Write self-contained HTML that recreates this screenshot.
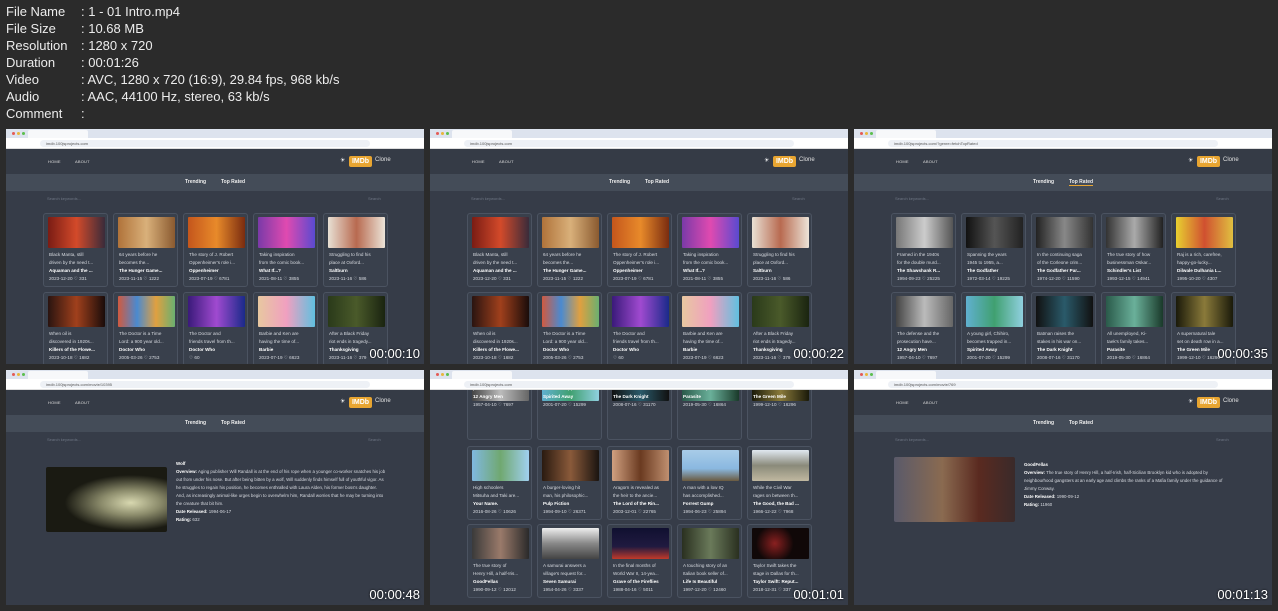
<!DOCTYPE html><html><head><meta charset="utf-8"><style>
*{margin:0;padding:0;box-sizing:border-box}
body{width:1278px;height:611px;background:#2b2b2b;font-family:"Liberation Sans",sans-serif;position:relative;overflow:hidden}
.info{position:absolute;left:6px;top:3px;color:#ececec;font-size:13px;line-height:17px}
.info div span{display:inline-block;width:75px}
.t{position:absolute;width:418px;height:235px;background:#363c48;overflow:hidden}
.tab{position:absolute;left:0;top:0;width:418px;height:9px;background:#dde3ee}
.tab i{position:absolute;top:3px;width:3px;height:3px;border-radius:50%}
.tab b{position:absolute;left:22px;top:1px;width:60px;height:8px;background:#f7f8fa;border-radius:2px 2px 0 0}
.addr{position:absolute;left:0;top:9px;width:418px;height:11px;background:#fff;border-bottom:1px solid #ddd}
.addr b{position:absolute;left:34px;top:2px;width:330px;height:7px;background:#eef1f6;border-radius:4px}
.addr s{position:absolute;left:40px;top:2px;font-size:4px;color:#555;text-decoration:none;line-height:7px}
.hd{position:absolute;left:0;top:20px;width:418px;height:25px;background:#353b46}
.hd .n{position:absolute;top:10px;font-size:4px;color:#ddd;letter-spacing:.2px}
.hd .im{position:absolute;left:343px;top:7px;width:23px;height:11px;background:#e8a531;border-radius:2px;color:#fff;font-size:7px;line-height:11px;text-align:center;font-weight:bold}
.hd .cl{position:absolute;left:369px;top:8px;font-size:6px;color:#e0e0e0}
.hd .sun{position:absolute;left:334px;top:8px;font-size:6px;color:#fff}
.nv{position:absolute;left:0;top:45px;width:418px;height:17px;background:#444c58}
.nv span{position:absolute;top:5px;font-size:5px;color:#eee;font-weight:bold}
.sr{position:absolute;top:67px;font-size:4px;color:#6e7684}
.c{position:absolute;width:65px;height:74px;border:1px solid #4b5361;border-radius:3px;background:#39404c}
.c .p{position:absolute;left:4px;top:3px;width:57px;height:31px;border-radius:1px}
.c .x{position:absolute;left:5px;top:37px;font-size:4.6px;line-height:8px;color:#d7dae0;white-space:nowrap;width:56px;overflow:hidden}
.c .x b{color:#fff}
.ts{position:absolute;right:4px;bottom:3px;color:#fff;font-size:13px;text-shadow:0 0 2px #000}
.dt{position:absolute;font-size:4.4px;line-height:8px;color:#d7dae0}
.dt b{color:#fff}
</style></head><body>
<div class="info">
<div><span>File Name</span>: 1 - 01 Intro.mp4</div>
<div><span>File Size</span>: 10.68 MB</div>
<div><span>Resolution</span>: 1280 x 720</div>
<div><span>Duration</span>: 00:01:26</div>
<div><span>Video</span>: AVC, 1280 x 720 (16:9), 29.84 fps, 968 kb/s</div>
<div><span>Audio</span>: AAC, 44100 Hz, stereo, 63 kb/s</div>
<div><span>Comment</span>:</div>
</div>

<!-- thumb 1 -->
<div class="t" style="left:6px;top:129px">
<div class="tab"><i style="left:6px;background:#e45b55"></i><i style="left:11px;background:#e8b63a"></i><i style="left:16px;background:#5bbf4e"></i><b></b></div>
<div class="addr"><b></b><s>imdb.100jsprojects.com</s></div>
<div class="hd"><span class="n" style="left:42px">HOME</span><span class="n" style="left:69px">ABOUT</span><span class="sun">☀</span><span class="im">IMDb</span><span class="cl">Clone</span></div>
<div class="nv"><span style="left:179px">Trending</span><span style="left:215px">Top Rated</span></div>
<div class="sr" style="left:41px">Search keywords...</div><div class="sr" style="left:362px">Search</div>
<div class="c" style="left:37px;top:84px"><div class="p" style="background:linear-gradient(90deg,#7a1c14,#d34a2a,#3a2b3a)"></div><div class="x">Black Manta, still<br>driven by the need t...<br><b>Aquaman and the ...</b><br>2023-12-20 ♡ 331</div></div>
<div class="c" style="left:107px;top:84px"><div class="p" style="background:linear-gradient(90deg,#b0733a,#d9b07a,#8a5a30)"></div><div class="x">64 years before he<br>becomes the...<br><b>The Hunger Game...</b><br>2023-11-15 ♡ 1222</div></div>
<div class="c" style="left:177px;top:84px"><div class="p" style="background:linear-gradient(90deg,#c4561c,#e88a2a,#7a2c10)"></div><div class="x">The story of J. Robert<br>Oppenheimer's role i...<br><b>Oppenheimer</b><br>2023-07-19 ♡ 6781</div></div>
<div class="c" style="left:247px;top:84px"><div class="p" style="background:linear-gradient(90deg,#7a3aa8,#e04ab0,#5a4ad0)"></div><div class="x">Taking inspiration<br>from the comic book...<br><b>What If...?</b><br>2021-08-11 ♡ 3855</div></div>
<div class="c" style="left:317px;top:84px"><div class="p" style="background:linear-gradient(90deg,#e8e0d4,#b86a50,#ece4d8)"></div><div class="x">Struggling to find his<br>place at Oxford...<br><b>Saltburn</b><br>2023-11-16 ♡ 586</div></div>
<div class="c" style="left:37px;top:163px"><div class="p" style="background:linear-gradient(90deg,#2a1410,#a0401c,#1a0c0a)"></div><div class="x">When oil is<br>discovered in 1920s...<br><b>Killers of the Flowe...</b><br>2023-10-18 ♡ 1682</div></div>
<div class="c" style="left:107px;top:163px"><div class="p" style="background:linear-gradient(90deg,#d05a40,#4a8ad0,#e0a040,#6ab070)"></div><div class="x">The Doctor is a Time<br>Lord: a 900 year old...<br><b>Doctor Who</b><br>2005-03-26 ♡ 2753</div></div>
<div class="c" style="left:177px;top:163px"><div class="p" style="background:linear-gradient(90deg,#3a1a7a,#a04ad0,#1a2a8a)"></div><div class="x">The Doctor and<br>friends travel from th...<br><b>Doctor Who</b><br>♡ 60</div></div>
<div class="c" style="left:247px;top:163px"><div class="p" style="background:linear-gradient(90deg,#e8c8a0,#f0a0c0,#60c0e0)"></div><div class="x">Barbie and Ken are<br>having the time of...<br><b>Barbie</b><br>2023-07-19 ♡ 6623</div></div>
<div class="c" style="left:317px;top:163px"><div class="p" style="background:linear-gradient(90deg,#2a3a1a,#4a5a2a,#1a2410)"></div><div class="x">After a Black Friday<br>riot ends in tragedy...<br><b>Thanksgiving</b><br>2023-11-16 ♡ 379</div></div>
<div class="ts">00:00:10</div>
</div>

<!-- thumb 2 -->
<div class="t" style="left:430px;top:129px">
<div class="tab"><i style="left:6px;background:#e45b55"></i><i style="left:11px;background:#e8b63a"></i><i style="left:16px;background:#5bbf4e"></i><b></b></div>
<div class="addr"><b></b><s>imdb.100jsprojects.com</s></div>
<div class="hd"><span class="n" style="left:42px">HOME</span><span class="n" style="left:69px">ABOUT</span><span class="sun">☀</span><span class="im">IMDb</span><span class="cl">Clone</span></div>
<div class="nv"><span style="left:179px">Trending</span><span style="left:215px">Top Rated</span></div>
<div class="sr" style="left:41px">Search keywords...</div><div class="sr" style="left:362px">Search</div>
<div class="c" style="left:37px;top:84px"><div class="p" style="background:linear-gradient(90deg,#7a1c14,#d34a2a,#3a2b3a)"></div><div class="x">Black Manta, still<br>driven by the need t...<br><b>Aquaman and the ...</b><br>2023-12-20 ♡ 331</div></div>
<div class="c" style="left:107px;top:84px"><div class="p" style="background:linear-gradient(90deg,#b0733a,#d9b07a,#8a5a30)"></div><div class="x">64 years before he<br>becomes the...<br><b>The Hunger Game...</b><br>2023-11-15 ♡ 1222</div></div>
<div class="c" style="left:177px;top:84px"><div class="p" style="background:linear-gradient(90deg,#c4561c,#e88a2a,#7a2c10)"></div><div class="x">The story of J. Robert<br>Oppenheimer's role i...<br><b>Oppenheimer</b><br>2023-07-19 ♡ 6781</div></div>
<div class="c" style="left:247px;top:84px"><div class="p" style="background:linear-gradient(90deg,#7a3aa8,#e04ab0,#5a4ad0)"></div><div class="x">Taking inspiration<br>from the comic book...<br><b>What If...?</b><br>2021-08-11 ♡ 3855</div></div>
<div class="c" style="left:317px;top:84px"><div class="p" style="background:linear-gradient(90deg,#e8e0d4,#b86a50,#ece4d8)"></div><div class="x">Struggling to find his<br>place at Oxford...<br><b>Saltburn</b><br>2023-11-16 ♡ 586</div></div>
<div class="c" style="left:37px;top:163px"><div class="p" style="background:linear-gradient(90deg,#2a1410,#a0401c,#1a0c0a)"></div><div class="x">When oil is<br>discovered in 1920s...<br><b>Killers of the Flowe...</b><br>2023-10-18 ♡ 1682</div></div>
<div class="c" style="left:107px;top:163px"><div class="p" style="background:linear-gradient(90deg,#d05a40,#4a8ad0,#e0a040,#6ab070)"></div><div class="x">The Doctor is a Time<br>Lord: a 900 year old...<br><b>Doctor Who</b><br>2005-03-26 ♡ 2753</div></div>
<div class="c" style="left:177px;top:163px"><div class="p" style="background:linear-gradient(90deg,#3a1a7a,#a04ad0,#1a2a8a)"></div><div class="x">The Doctor and<br>friends travel from th...<br><b>Doctor Who</b><br>♡ 60</div></div>
<div class="c" style="left:247px;top:163px"><div class="p" style="background:linear-gradient(90deg,#e8c8a0,#f0a0c0,#60c0e0)"></div><div class="x">Barbie and Ken are<br>having the time of...<br><b>Barbie</b><br>2023-07-19 ♡ 6623</div></div>
<div class="c" style="left:317px;top:163px"><div class="p" style="background:linear-gradient(90deg,#2a3a1a,#4a5a2a,#1a2410)"></div><div class="x">After a Black Friday<br>riot ends in tragedy...<br><b>Thanksgiving</b><br>2023-11-16 ♡ 379</div></div>
<div class="ts">00:00:22</div>
</div>

<!-- thumb 3 -->
<div class="t" style="left:854px;top:129px">
<div class="tab"><i style="left:6px;background:#e45b55"></i><i style="left:11px;background:#e8b63a"></i><i style="left:16px;background:#5bbf4e"></i><b></b></div>
<div class="addr"><b></b><s>imdb.100jsprojects.com/?genre=fetchTopRated</s></div>
<div class="hd"><span class="n" style="left:42px">HOME</span><span class="n" style="left:69px">ABOUT</span><span class="sun">☀</span><span class="im">IMDb</span><span class="cl">Clone</span></div>
<div class="nv"><span style="left:179px">Trending</span><span style="left:215px;border-bottom:1px solid #e8a531">Top Rated</span></div>
<div class="sr" style="left:41px">Search keywords...</div><div class="sr" style="left:362px">Search</div>
<div class="c" style="left:37px;top:84px"><div class="p" style="background:linear-gradient(90deg,#777,#ccc,#555)"></div><div class="x">Framed in the 1940s<br>for the double murd...<br><b>The Shawshank R...</b><br>1994-09-23 ♡ 25225</div></div>
<div class="c" style="left:107px;top:84px"><div class="p" style="background:linear-gradient(90deg,#111,#555,#222)"></div><div class="x">Spanning the years<br>1945 to 1955, a...<br><b>The Godfather</b><br>1972-03-14 ♡ 19225</div></div>
<div class="c" style="left:177px;top:84px"><div class="p" style="background:linear-gradient(90deg,#222,#888,#333)"></div><div class="x">In the continuing saga<br>of the Corleone crim...<br><b>The Godfather Par...</b><br>1974-12-20 ♡ 11590</div></div>
<div class="c" style="left:247px;top:84px"><div class="p" style="background:linear-gradient(90deg,#333,#aaa,#222)"></div><div class="x">The true story of how<br>businessman Oskar...<br><b>Schindler's List</b><br>1993-12-15 ♡ 14941</div></div>
<div class="c" style="left:317px;top:84px"><div class="p" style="background:linear-gradient(90deg,#e8d030,#d05030,#e0c040)"></div><div class="x">Raj is a rich, carefree,<br>happy-go-lucky...<br><b>Dilwale Dulhania L...</b><br>1995-10-20 ♡ 4307</div></div>
<div class="c" style="left:37px;top:163px"><div class="p" style="background:linear-gradient(90deg,#444,#bbb,#666)"></div><div class="x">The defense and the<br>prosecution have...<br><b>12 Angry Men</b><br>1957-04-10 ♡ 7697</div></div>
<div class="c" style="left:107px;top:163px"><div class="p" style="background:linear-gradient(90deg,#60b0d0,#40a070,#90d0e0)"></div><div class="x">A young girl, Chihiro,<br>becomes trapped in...<br><b>Spirited Away</b><br>2001-07-20 ♡ 15299</div></div>
<div class="c" style="left:177px;top:163px"><div class="p" style="background:linear-gradient(90deg,#111,#2a5a6a,#111)"></div><div class="x">Batman raises the<br>stakes in his war on...<br><b>The Dark Knight</b><br>2008-07-16 ♡ 31170</div></div>
<div class="c" style="left:247px;top:163px"><div class="p" style="background:linear-gradient(90deg,#2a5a4a,#6ab09a,#1a3a2a)"></div><div class="x">All unemployed, Ki-<br>taek's family takes...<br><b>Parasite</b><br>2019-05-30 ♡ 16864</div></div>
<div class="c" style="left:317px;top:163px"><div class="p" style="background:linear-gradient(90deg,#1a1a0a,#8a7a3a,#1a1a0a)"></div><div class="x">A supernatural tale<br>set on death row in a...<br><b>The Green Mile</b><br>1999-12-10 ♡ 16296</div></div>
<div class="ts">00:00:35</div>
</div>

<!-- thumb 4 -->
<div class="t" style="left:6px;top:370px">
<div class="tab"><i style="left:6px;background:#e45b55"></i><i style="left:11px;background:#e8b63a"></i><i style="left:16px;background:#5bbf4e"></i><b></b></div>
<div class="addr"><b></b><s>imdb.100jsprojects.com/movie/10395</s></div>
<div class="hd"><span class="n" style="left:42px">HOME</span><span class="n" style="left:69px">ABOUT</span><span class="sun">☀</span><span class="im">IMDb</span><span class="cl">Clone</span></div>
<div class="nv"><span style="left:179px">Trending</span><span style="left:215px">Top Rated</span></div>
<div class="sr" style="left:41px">Search keywords...</div><div class="sr" style="left:362px">Search</div>
<div style="position:absolute;left:40px;top:97px;width:121px;height:65px;border-radius:2px;background:radial-gradient(ellipse at 70% 55%,#d8d8b0 0,#8a8a6a 25%,#1a1a12 55%),#111"></div>
<div class="dt" style="left:170px;top:90px;width:210px"><b>Wolf</b><br><b>Overview:</b> Aging publisher Will Randall is at the end of his rope when a younger co-worker snatches his job out from under his nose. But after being bitten by a wolf, Will suddenly finds himself full of youthful vigor. As he struggles to regain his position, he becomes enthralled with Laura Alden, his former boss's daughter. And, as increasingly animal-like urges begin to overwhelm him, Randall worries that he may be turning into the creature that bit him.<br><b>Date Released:</b> 1994-06-17<br><b>Rating:</b> 632</div>
<div class="ts">00:00:48</div>
</div>

<!-- thumb 5 -->
<div class="t" style="left:430px;top:370px">
<div class="c" style="left:37px;top:-4px"><div class="p" style="background:linear-gradient(90deg,#444,#bbb,#666)"></div><div class="x" style="top:10px">The defense and the<br>prosecution have...<br><b>12 Angry Men</b><br>1957-04-10 ♡ 7697</div></div>
<div class="c" style="left:107px;top:-4px"><div class="p" style="background:linear-gradient(90deg,#60b0d0,#40a070,#90d0e0)"></div><div class="x" style="top:10px">A young girl, Chihiro,<br>becomes trapped in...<br><b>Spirited Away</b><br>2001-07-20 ♡ 15299</div></div>
<div class="c" style="left:177px;top:-4px"><div class="p" style="background:linear-gradient(90deg,#111,#2a5a6a,#111)"></div><div class="x" style="top:10px">Batman raises the<br>stakes in his war on...<br><b>The Dark Knight</b><br>2008-07-16 ♡ 31170</div></div>
<div class="c" style="left:247px;top:-4px"><div class="p" style="background:linear-gradient(90deg,#2a5a4a,#6ab09a,#1a3a2a)"></div><div class="x" style="top:10px">All unemployed, Ki-<br>taek's family takes...<br><b>Parasite</b><br>2019-05-30 ♡ 16864</div></div>
<div class="c" style="left:317px;top:-4px"><div class="p" style="background:linear-gradient(90deg,#1a1a0a,#8a7a3a,#1a1a0a)"></div><div class="x" style="top:10px">A supernatural tale<br>set on death row in a...<br><b>The Green Mile</b><br>1999-12-10 ♡ 16296</div></div>
<div class="c" style="left:37px;top:76px"><div class="p" style="background:linear-gradient(90deg,#80b8e0,#70a870,#a0d0f0)"></div><div class="x">High schoolers<br>Mitsuha and Taki are...<br><b>Your Name.</b><br>2016-08-26 ♡ 10626</div></div>
<div class="c" style="left:107px;top:76px"><div class="p" style="background:linear-gradient(90deg,#2a1a10,#8a5a3a,#1a1410)"></div><div class="x">A burger-loving hit<br>man, his philosophic...<br><b>Pulp Fiction</b><br>1994-09-10 ♡ 26371</div></div>
<div class="c" style="left:177px;top:76px"><div class="p" style="background:linear-gradient(90deg,#d0a080,#6a3a20,#c09070)"></div><div class="x">Aragorn is revealed as<br>the heir to the ancie...<br><b>The Lord of the Rin...</b><br>2003-12-01 ♡ 22765</div></div>
<div class="c" style="left:247px;top:76px"><div class="p" style="background:linear-gradient(180deg,#a8cce8,#8ab8e0 60%,#6a5a40)"></div><div class="x">A man with a low IQ<br>has accomplished...<br><b>Forrest Gump</b><br>1994-06-23 ♡ 25894</div></div>
<div class="c" style="left:317px;top:76px"><div class="p" style="background:linear-gradient(180deg,#e0e8f0,#8a8a7a 50%,#c0b8a0)"></div><div class="x">While the Civil War<br>rages on between th...<br><b>The Good, the Bad ...</b><br>1966-12-22 ♡ 7968</div></div>
<div class="c" style="left:37px;top:154px"><div class="p" style="background:linear-gradient(90deg,#3a3a3a,#9a7a6a,#2a2a2a)"></div><div class="x">The true story of<br>Henry Hill, a half-Iris...<br><b>GoodFellas</b><br>1990-09-12 ♡ 12012</div></div>
<div class="c" style="left:107px;top:154px"><div class="p" style="background:linear-gradient(180deg,#eee,#888,#444)"></div><div class="x">A samurai answers a<br>village's request for...<br><b>Seven Samurai</b><br>1954-04-26 ♡ 3337</div></div>
<div class="c" style="left:177px;top:154px"><div class="p" style="background:linear-gradient(180deg,#101030,#201a40 60%,#c03a2a)"></div><div class="x">In the final months of<br>World War II, 14-yea...<br><b>Grave of the Fireflies</b><br>1988-04-16 ♡ 5011</div></div>
<div class="c" style="left:247px;top:154px"><div class="p" style="background:linear-gradient(90deg,#2a3020,#6a7a5a,#2a3020)"></div><div class="x">A touching story of an<br>Italian book seller of...<br><b>Life Is Beautiful</b><br>1997-12-20 ♡ 12460</div></div>
<div class="c" style="left:317px;top:154px"><div class="p" style="background:radial-gradient(circle at 40% 50%,#8a2020,#100808 50%)"></div><div class="x">Taylor Swift takes the<br>stage in Dallas for th...<br><b>Taylor Swift: Reput...</b><br>2018-12-31 ♡ 337</div></div>
<div class="tab"><i style="left:6px;background:#e45b55"></i><i style="left:11px;background:#e8b63a"></i><i style="left:16px;background:#5bbf4e"></i><b></b></div>
<div class="addr"><b></b><s>imdb.100jsprojects.com</s></div>
<div class="ts">00:01:01</div>
</div>

<!-- thumb 6 -->
<div class="t" style="left:854px;top:370px">
<div class="tab"><i style="left:6px;background:#e45b55"></i><i style="left:11px;background:#e8b63a"></i><i style="left:16px;background:#5bbf4e"></i><b></b></div>
<div class="addr"><b></b><s>imdb.100jsprojects.com/movie/769</s></div>
<div class="hd"><span class="n" style="left:42px">HOME</span><span class="n" style="left:69px">ABOUT</span><span class="sun">☀</span><span class="im">IMDb</span><span class="cl">Clone</span></div>
<div class="nv"><span style="left:179px">Trending</span><span style="left:215px">Top Rated</span></div>
<div class="sr" style="left:41px">Search keywords...</div><div class="sr" style="left:362px">Search</div>
<div style="position:absolute;left:40px;top:87px;width:121px;height:65px;border-radius:2px;background:linear-gradient(90deg,#5a5a6a,#8a6a50 40%,#5a2a20 70%,#3a2a2a)"></div>
<div class="dt" style="left:170px;top:91px;width:205px"><b>GoodFellas</b><br><b>Overview:</b> The true story of Henry Hill, a half-Irish, half-Sicilian Brooklyn kid who is adopted by neighbourhood gangsters at an early age and climbs the ranks of a Mafia family under the guidance of Jimmy Conway.<br><b>Date Released:</b> 1990-09-12<br><b>Rating:</b> 11960</div>
<div class="ts">00:01:13</div>
</div>
</body></html>
